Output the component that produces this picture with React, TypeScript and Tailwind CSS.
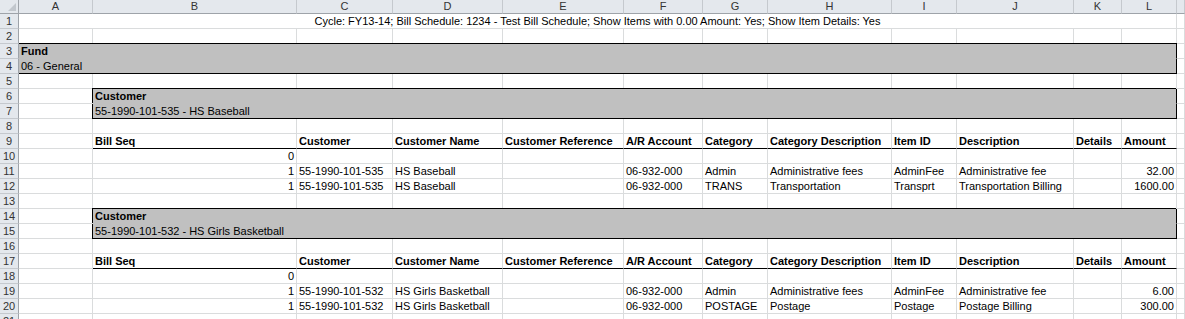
import React from 'react';
import clsx from 'clsx';

// column template: row header, A..L, then the sliver of M
const COLS =
  'grid grid-cols-[19px_74px_204px_96px_110px_121px_79px_65px_124px_65px_117px_48px_55px_1fr]';
const LETTERS = ['A', 'B', 'C', 'D', 'E', 'F', 'G', 'H', 'I', 'J', 'K', 'L', ''];

const HEADERS = [
  'Bill Seq',
  'Customer',
  'Customer Name',
  'Customer Reference',
  'A/R Account',
  'Category',
  'Category Description',
  'Item ID',
  'Description',
  'Details',
  'Amount',
];

type Row =
  | { kind: 'title'; text: string }
  | { kind: 'empty' }
  | { kind: 'band'; text: string; part: 'top' | 'bottom'; level: 'fund' | 'customer' }
  | { kind: 'header' }
  | { kind: 'data'; values: string[] };

const rows: Row[] = [
  {
    kind: 'title',
    text: 'Cycle: FY13-14; Bill Schedule: 1234 - Test Bill Schedule; Show Items with 0.00 Amount: Yes; Show Item Details: Yes',
  },
  { kind: 'empty' },
  { kind: 'band', text: 'Fund', part: 'top', level: 'fund' },
  { kind: 'band', text: '06 - General', part: 'bottom', level: 'fund' },
  { kind: 'empty' },
  { kind: 'band', text: 'Customer', part: 'top', level: 'customer' },
  { kind: 'band', text: '55-1990-101-535 - HS Baseball', part: 'bottom', level: 'customer' },
  { kind: 'empty' },
  { kind: 'header' },
  { kind: 'data', values: ['0'] },
  {
    kind: 'data',
    values: ['1', '55-1990-101-535', 'HS Baseball', '', '06-932-000', 'Admin', 'Administrative fees', 'AdminFee', 'Administrative fee', '', '32.00'],
  },
  {
    kind: 'data',
    values: ['1', '55-1990-101-535', 'HS Baseball', '', '06-932-000', 'TRANS', 'Transportation', 'Transprt', 'Transportation Billing', '', '1600.00'],
  },
  { kind: 'empty' },
  { kind: 'band', text: 'Customer', part: 'top', level: 'customer' },
  { kind: 'band', text: '55-1990-101-532 - HS Girls Basketball', part: 'bottom', level: 'customer' },
  { kind: 'empty' },
  { kind: 'header' },
  { kind: 'data', values: ['0'] },
  {
    kind: 'data',
    values: ['1', '55-1990-101-532', 'HS Girls Basketball', '', '06-932-000', 'Admin', 'Administrative fees', 'AdminFee', 'Administrative fee', '', '6.00'],
  },
  {
    kind: 'data',
    values: ['1', '55-1990-101-532', 'HS Girls Basketball', '', '06-932-000', 'POSTAGE', 'Postage', 'Postage', 'Postage Billing', '', '300.00'],
  },
  { kind: 'empty' },
];

const cellBase =
  'border-r border-b border-[#dadcdd] px-[2px] leading-[14px] whitespace-nowrap overflow-visible';

function Cell({ children, className }: { children?: React.ReactNode; className?: string }) {
  return <div className={clsx(cellBase, className)}>{children}</div>;
}

function RowHeader({ n }: { n: number }) {
  return (
    <div className="border-r border-b border-r-[#9ea3a9] border-b-[#c5c9ce] bg-[#e4e8ed] text-center text-[#333] leading-[14px]">
      {n}
    </div>
  );
}

function SheetRow({ row, n }: { row: Row; n: number }) {
  const cells: React.ReactNode[] = [];

  if (row.kind === 'title') {
    cells.push(
      <Cell key="t" className="col-span-12 text-center">
        {row.text}
      </Cell>
    );
  } else if (row.kind === 'empty') {
    for (let i = 0; i < 12; i++) cells.push(<Cell key={i} />);
  } else if (row.kind === 'band') {
    const isTop = row.part === 'top';
    // gray box with black outline; top/left lines drawn by shadow over the neighbour's gridline
    const band = clsx(
      'bg-[#c0c0c0] border-r-black',
      isTop ? 'border-b-[#c0c0c0] font-bold' : 'border-b-black',
      row.level === 'fund' && isTop && 'shadow-[0_-1px_0_#000]',
      row.level === 'customer' && isTop && 'shadow-[-1px_-1px_0_#000]',
      row.level === 'customer' && !isTop && 'shadow-[-1px_0_0_#000]'
    );
    if (row.level === 'fund') {
      cells.push(
        <Cell key="b" className={clsx('col-span-12', band)}>
          {row.text}
        </Cell>
      );
    } else {
      cells.push(<Cell key="a" />);
      cells.push(
        <Cell key="b" className={clsx('col-span-11', band)}>
          {row.text}
        </Cell>
      );
    }
  } else if (row.kind === 'header') {
    cells.push(<Cell key="a" />);
    HEADERS.forEach((h) => {
      cells.push(
        <Cell key={h} className="font-bold border-b-black">
          {h}
        </Cell>
      );
    });
  } else {
    cells.push(<Cell key="a" />);
    for (let i = 0; i < 11; i++) {
      const v = row.values[i] ?? '';
      const right = i === 0 || i === 10;
      cells.push(
        <Cell key={i} className={clsx(right && 'text-right')}>
          {v}
        </Cell>
      );
    }
  }

  return (
    <div className={clsx(COLS, 'h-[15px]')}>
      <RowHeader n={n} />
      {cells}
      <Cell />
    </div>
  );
}

export default function App() {
  return (
    <div className="h-[319px] w-[1185px] overflow-hidden bg-white text-[11px] text-black font-['Liberation_Sans',Arial,sans-serif]">
      {/* column letters */}
      <div className={clsx(COLS, 'h-[14px]')}>
        <div className="relative border-r border-b border-r-[#9ea3a9] border-b-[#9ea3a9] bg-[#e4e8ed]">
          <svg width="8" height="8" viewBox="0 0 8 8" className="absolute bottom-[2px] right-[2px]">
            <polygon points="8,0 8,8 0,8" fill="#c2c7cd" />
          </svg>
        </div>
        {LETTERS.map((l, i) => (
          <div
            key={i}
            className="border-r border-b border-r-[#c5c9ce] border-b-[#9ea3a9] bg-[#e4e8ed] text-center leading-[13px] text-[#333]"
          >
            {l}
          </div>
        ))}
      </div>

      {rows.map((r, i) => (
        <SheetRow key={i} row={r} n={i + 1} />
      ))}
    </div>
  );
}
